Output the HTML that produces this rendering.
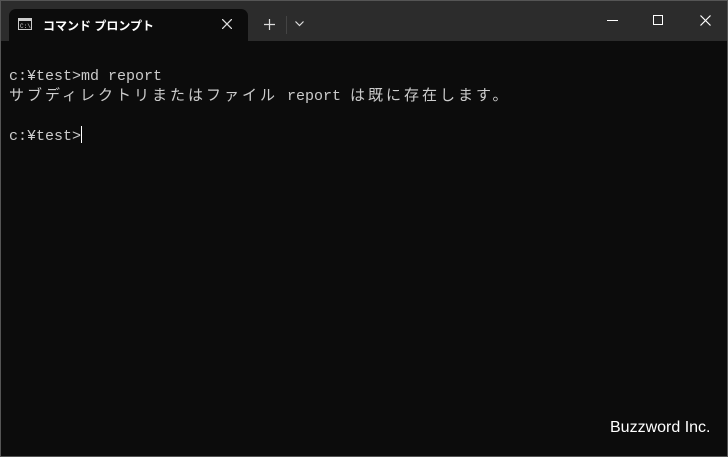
<!DOCTYPE html><html><head><meta charset="utf-8"><style>
body{margin:0;width:728px;height:457px;overflow:hidden;background:#0c0c0c;position:relative;font-family:"Liberation Sans","Noto Sans CJK JP",sans-serif}
#frame{position:absolute;inset:0;border:1px solid #555;box-sizing:border-box;pointer-events:none}
#bar{position:absolute;left:0;top:0;width:728px;height:41px;background:#2c2c2c}
#tab{position:absolute;left:9px;top:9px;width:239px;height:32px;background:#0c0c0c;border-radius:7px 7px 0 0}
.t{position:absolute;color:#fff;font-size:12px;font-weight:bold;left:43px;top:17px}
.term{position:absolute;left:9px;top:67px;font-family:"Liberation Mono","Noto Sans CJK JP",monospace;font-size:15px;line-height:19.5px;color:#ccc;white-space:pre}
.j{letter-spacing:3px;font-size:15px}
.wm{position:absolute;left:610px;top:419px;color:#fff;font-size:16px}
</style></head><body>
<div id="bar"></div><div id="tab"></div>
<svg style="position:absolute;left:18px;top:18px" width="14" height="12"><rect x="0.5" y="0.5" width="13" height="11" fill="none" stroke="#ccc"/><rect x="1" y="1" width="12" height="2" fill="#ccc"/><text x="2" y="10" font-size="6" fill="#ccc" font-family="Liberation Mono">C:\_</text></svg>
<div class="t">コマンド プロンプト</div>
<svg style="position:absolute;left:222px;top:19px" width="10" height="10"><path d="M0 0L10 10M10 0L0 10" stroke="#ddd" stroke-width="1.3"/></svg>
<svg style="position:absolute;left:264px;top:19px" width="11" height="11"><path d="M5.5 0V11M0 5.5H11" stroke="#ddd" stroke-width="1.2"/></svg>
<div style="position:absolute;left:286px;top:16px;width:1px;height:18px;background:#444"></div>
<svg style="position:absolute;left:295px;top:21px" width="9" height="6"><path d="M0.5 0.5L4.5 4.5L8.5 0.5" stroke="#ddd" fill="none" stroke-width="1.2"/></svg>
<div style="position:absolute;left:607px;top:20px;width:11px;height:1px;background:#fff"></div>
<div style="position:absolute;left:653px;top:15px;width:8px;height:8px;border:1px solid #fff"></div>
<svg style="position:absolute;left:700px;top:15px" width="11" height="11"><path d="M0.5 0.5L10.5 10.5M10.5 0.5L0.5 10.5" stroke="#fff" stroke-width="1.2"/></svg>
<div class="term">c:¥test&gt;md report
<span class="j">サブディレクトリまたはファイル</span> report <span class="j">は既に存在します。</span>

c:¥test&gt;<span style="display:inline-block;width:1px;height:17px;background:#fff;vertical-align:-3px"></span></div>
<div class="wm">Buzzword Inc.</div>
<div id="frame"></div>
</body></html>
